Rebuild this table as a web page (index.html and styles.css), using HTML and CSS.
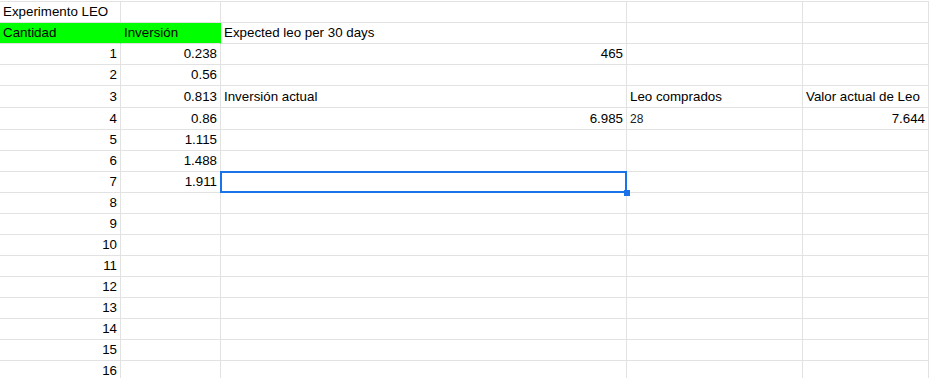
FILE: index.html
```html
<!DOCTYPE html>
<html>
<head>
<meta charset="utf-8">
<link rel="stylesheet" href="styles.css">
</head>
<body>
<div class="sheet">
  <div class="c">Experimento LEO</div><div class="c"></div><div class="c"></div><div class="c"></div><div class="c"></div>
  <div class="c green">Cantidad</div><div class="c green">Inversión</div><div class="c">Expected leo per 30 days</div><div class="c"></div><div class="c"></div>
  <div class="c r">1</div><div class="c r">0.238</div><div class="c r">465</div><div class="c"></div><div class="c"></div>
  <div class="c r">2</div><div class="c r">0.56</div><div class="c"></div><div class="c"></div><div class="c"></div>
  <div class="c r">3</div><div class="c r">0.813</div><div class="c">Inversión actual</div><div class="c">Leo comprados</div><div class="c">Valor actual de Leo</div>
  <div class="c r">4</div><div class="c r">0.86</div><div class="c r">6.985</div><div class="c small">28</div><div class="c r">7.644</div>
  <div class="c r">5</div><div class="c r">1.115</div><div class="c"></div><div class="c"></div><div class="c"></div>
  <div class="c r">6</div><div class="c r">1.488</div><div class="c"></div><div class="c"></div><div class="c"></div>
  <div class="c r">7</div><div class="c r">1.911</div><div class="c sel"></div><div class="c"></div><div class="c"></div>
  <div class="c r">8</div><div class="c"></div><div class="c"></div><div class="c"></div><div class="c"></div>
  <div class="c r">9</div><div class="c"></div><div class="c"></div><div class="c"></div><div class="c"></div>
  <div class="c r">10</div><div class="c"></div><div class="c"></div><div class="c"></div><div class="c"></div>
  <div class="c r">11</div><div class="c"></div><div class="c"></div><div class="c"></div><div class="c"></div>
  <div class="c r">12</div><div class="c"></div><div class="c"></div><div class="c"></div><div class="c"></div>
  <div class="c r">13</div><div class="c"></div><div class="c"></div><div class="c"></div><div class="c"></div>
  <div class="c r">14</div><div class="c"></div><div class="c"></div><div class="c"></div><div class="c"></div>
  <div class="c r">15</div><div class="c"></div><div class="c"></div><div class="c"></div><div class="c"></div>
  <div class="c r">16</div><div class="c"></div><div class="c"></div><div class="c"></div><div class="c"></div>
</div>
</body>
</html>
```
FILE: styles.css
```css
html, body {
  margin: 0;
  padding: 0;
  background: #fff;
  overflow: hidden;
}
.sheet {
  margin-top: 1px;
  border-top: 1px solid #e2e2e2;
  display: grid;
  grid-template-columns: 121px 100px 406px 176px 1fr;
  grid-template-rows: 21px 21px 21px 21px 22px 22px;
  grid-auto-rows: 21px;
  font-family: "Liberation Sans", Arial, sans-serif;
  font-size: 13.333px;
  color: #000;
}
.c {
  box-sizing: border-box;
  border-right: 1px solid #e2e2e2;
  border-bottom: 1px solid #e2e2e2;
  padding: 0 3px 2px 3px;
  display: flex;
  align-items: flex-end;
  white-space: nowrap;
  overflow: hidden;
  line-height: 16px;
}
.r {
  justify-content: flex-end;
}
.green {
  background: #00ff00;
  border-right-color: #00ff00;
}
.small {
  font-size: 12px;
  color: #222;
}
.sel {
  position: relative;
  overflow: visible;
}
.sel::after {
  content: "";
  position: absolute;
  left: -1px;
  top: -1px;
  right: -1px;
  bottom: -1px;
  border: 2px solid #1a73e8;
  pointer-events: none;
}
.sel::before {
  content: "";
  position: absolute;
  right: -4px;
  bottom: -4px;
  width: 6px;
  height: 6px;
  background: #1a73e8;
  z-index: 2;
}
```
